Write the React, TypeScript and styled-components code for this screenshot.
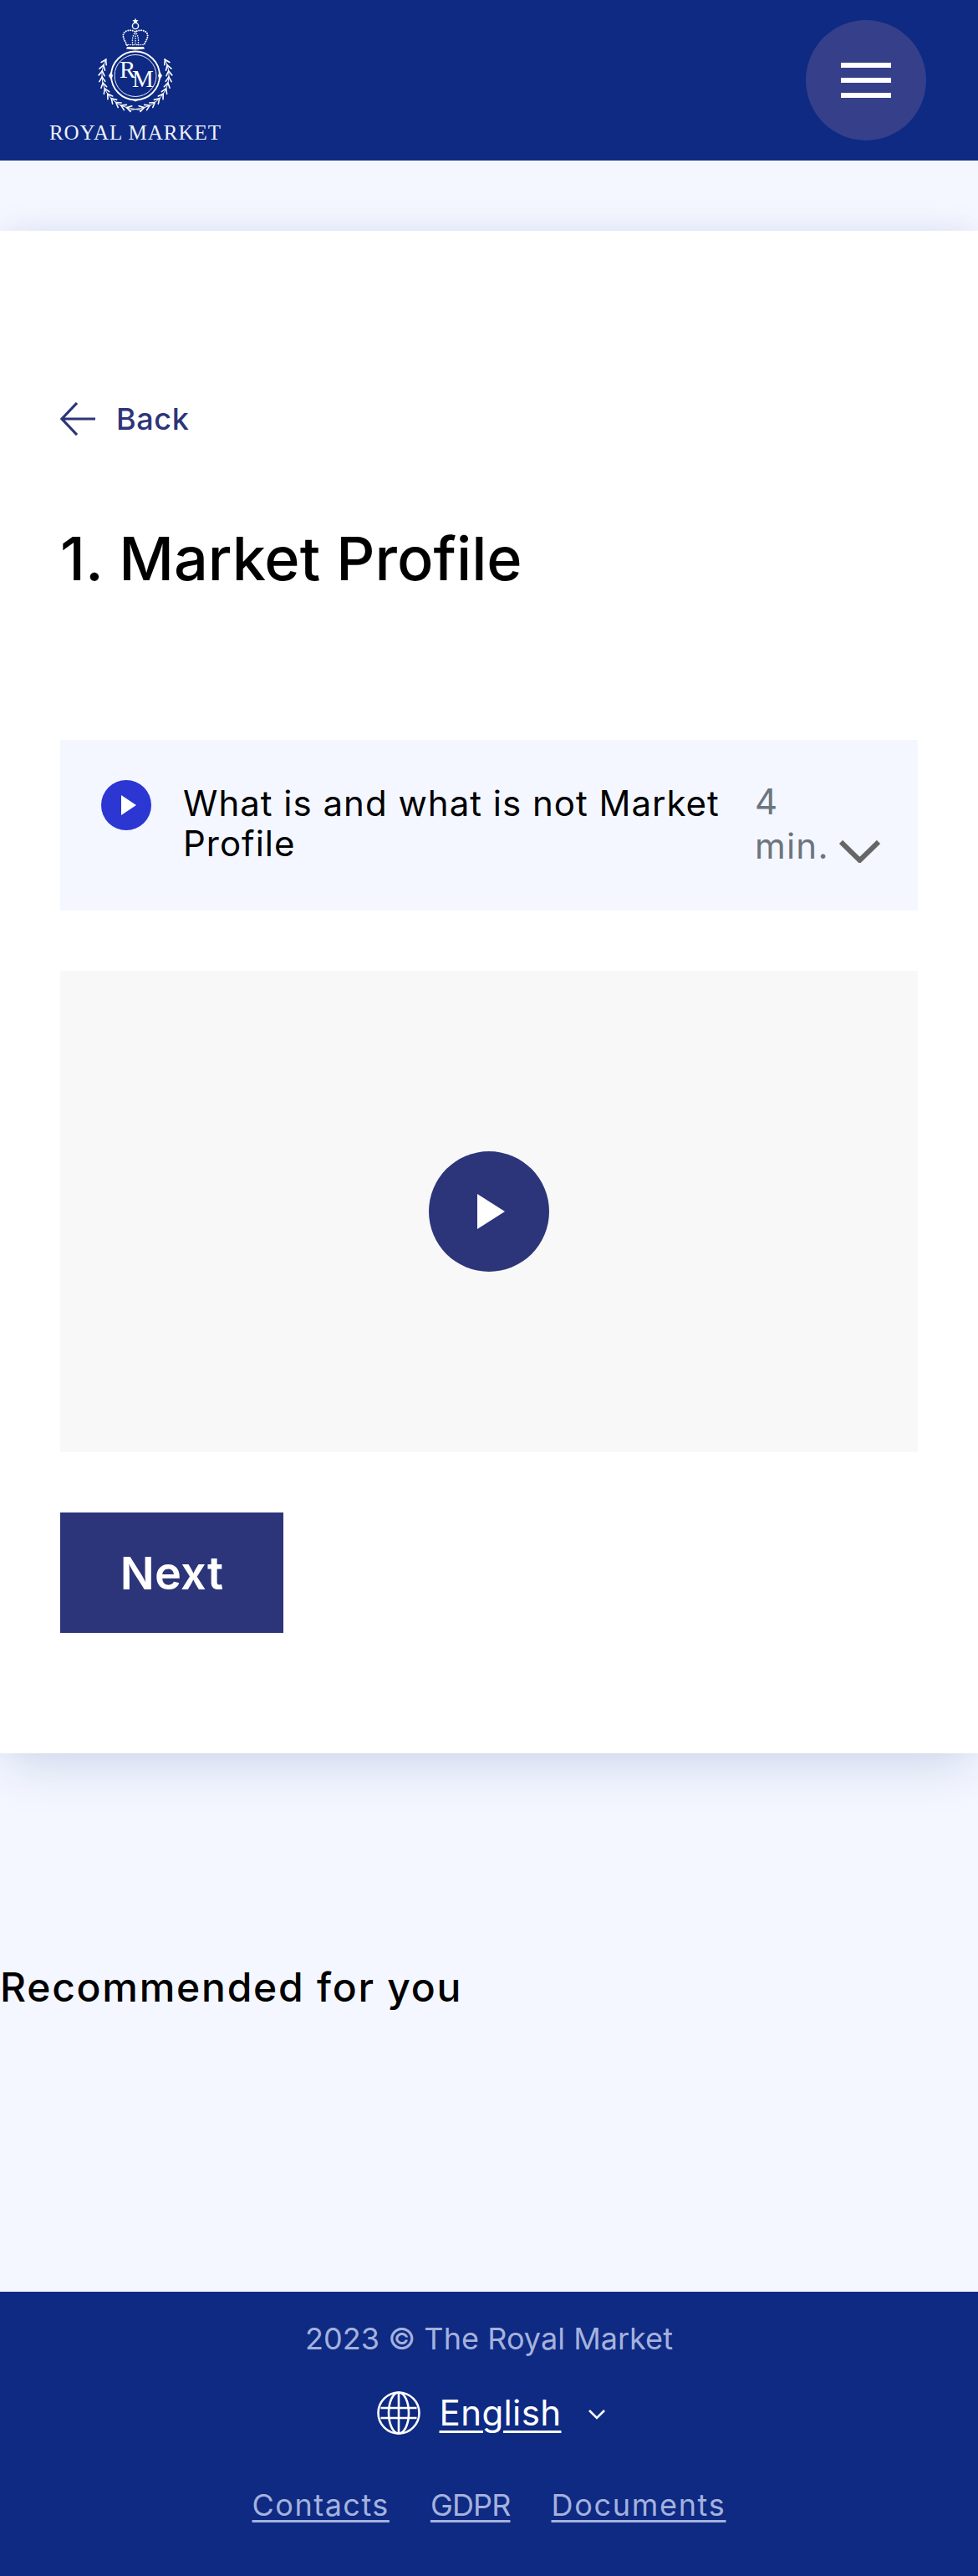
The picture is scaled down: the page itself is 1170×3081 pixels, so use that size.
import React from "react";
import styled, { createGlobalStyle } from "styled-components";

const Global = createGlobalStyle`
  html, body { margin: 0; padding: 0; background: #f4f7ff; }
  body { font-family: Inter, "Open Sans", "Liberation Sans", sans-serif; color: #000; }
  * { box-sizing: border-box; }
`;

const Page = styled.div`
  width: 1170px;
  height: 3081px;
  display: flex;
  flex-direction: column;
  overflow: hidden;
`;

const Header = styled.header`
  height: 192px;
  flex: none;
  background: #0e2a83;
  display: flex;
  justify-content: space-between;
  align-items: flex-start;
  padding: 20px 62px 0 60px;
  position: relative;
  z-index: 2;
`;

const Logo = styled.a`
  display: flex;
  flex-direction: column;
  align-items: center;
  width: 204px;
`;

const LogoMark = styled.svg`
  width: 104px;
  height: 118px;
  display: block;
`;

const LogoWord = styled.span`
  margin-top: 7px;
  font-family: "Liberation Serif", serif;
  font-size: 25px;
  line-height: 28px;
  letter-spacing: 1px;
  color: #eef0f8;
  white-space: nowrap;
`;

const Burger = styled.button`
  width: 144px;
  height: 144px;
  margin-top: 4px;
  border: 0;
  border-radius: 50%;
  background: #353f8a;
  display: flex;
  flex-direction: column;
  align-items: center;
  justify-content: center;
  gap: 12px;
  padding: 0;
`;

const BurgerBar = styled.span`
  width: 60px;
  height: 6px;
  background: #fff;
`;

const Main = styled.main`
  flex: 1;
  background: #f4f7ff;
  padding-top: 84px;
`;

const Card = styled.section`
  height: 1821px;
  background: #fff;
  padding: 205px 72px 0;
  box-shadow: 0 18px 60px -8px rgba(14, 42, 131, 0.17), 0 -4px 30px -6px rgba(14, 42, 131, 0.06);
`;

const BackLink = styled.a`
  display: flex;
  align-items: center;
  gap: 25px;
  height: 40px;
  font-size: 36px;
  font-weight: 500;
  line-height: 40px;
  letter-spacing: 0.6px;
  color: #2c3579;
`;

const Title = styled.h1`
  margin: 102px 0 0;
  font-size: 72px;
  line-height: 90px;
  font-weight: 500;
  letter-spacing: 0;
  color: #000;
`;

const Lesson = styled.div`
  margin-top: 172px;
  height: 204px;
  background: #f4f7ff;
  display: flex;
  align-items: flex-start;
  padding: 48px 45px 0 49px;
`;

const LessonIcon = styled.svg`
  width: 60px;
  height: 60px;
  flex: none;
  display: block;
`;

const LessonTitle = styled.div`
  margin: 4px 0 0 38px;
  width: 686px;
  flex: none;
  font-size: 42px;
  line-height: 48px;
  letter-spacing: 1px;
  color: #000;
`;

const LessonMeta = styled.div`
  display: flex;
  align-items: flex-end;
  gap: 8px;
  margin-left: -2px;
`;

const Duration = styled.div`
  width: 93px;
  font-size: 42px;
  line-height: 53px;
  color: #6c757d;
  margin-top: -1px;
  letter-spacing: 1.2px;
`;

const Chevron = styled.svg`
  width: 49px;
  height: 27px;
  flex: none;
  display: block;
  margin-bottom: 6px;
`;

const Video = styled.div`
  margin-top: 72px;
  height: 576px;
  background: #f8f8f8;
  display: flex;
  align-items: center;
  justify-content: center;
`;

const PlayCircle = styled.button`
  width: 144px;
  height: 144px;
  border: 0;
  padding: 0;
  border-radius: 50%;
  background: #2c3579;
  display: flex;
  align-items: center;
  justify-content: center;
`;

const PlayGlyph = styled.svg`
  width: 33px;
  height: 42px;
  margin-left: 5px;
  display: block;
`;

const NextButton = styled.button`
  display: block;
  margin-top: 72px;
  width: 267px;
  height: 144px;
  border: 0;
  background: #2c3579;
  color: #fff;
  font-family: inherit;
  font-size: 54px;
  font-weight: 600;
  letter-spacing: 0.3px;
  padding: 0;
`;

const Recommended = styled.h2`
  margin: 248px 0 0;
  font-size: 48px;
  line-height: 64px;
  font-weight: 500;
  letter-spacing: 1.75px;
  color: #000;
`;

const Footer = styled.footer`
  height: 340px;
  flex: none;
  background: #0e2a83;
  display: flex;
  flex-direction: column;
  align-items: center;
  padding-top: 34px;
`;

const Copyright = styled.div`
  font-size: 36px;
  line-height: 44px;
  color: #a5b1dd;
  letter-spacing: 0.05px;
`;

const Lang = styled.div`
  margin-top: 41px;
  height: 52px;
  display: flex;
  align-items: center;
  margin-left: 6px;
`;

const LangName = styled.a`
  margin-left: 23px;
  font-size: 42px;
  line-height: 52px;
  color: #fff;
  text-decoration: underline;
  text-decoration-thickness: 3px;
  text-underline-offset: 6px;
  letter-spacing: 0.4px;
`;

const LangCaret = styled.svg`
  width: 22px;
  height: 14px;
  margin-left: 32px;
  margin-top: 4px;
`;

const Links = styled.nav`
  margin-top: 62px;
  display: flex;
  gap: 49px;
`;

const FooterLink = styled.a<{ $tracking: number }>`
  font-size: 36px;
  line-height: 44px;
  color: #a5b1dd;
  text-decoration: underline;
  text-decoration-thickness: 3px;
  text-underline-offset: 5px;
  letter-spacing: ${(p) => p.$tracking}px;
`;

function Wreath({ flip }: { flip?: boolean }) {
  const cx = 162;
  const cy = 90;
  const r = 40;
  const leaves: React.ReactNode[] = [];
  for (let i = 0; i < 11; i++) {
    const deg = 152 + i * 10.3;
    const a = (deg * Math.PI) / 180;
    const px = cx + r * Math.cos(a);
    const py = cy - r * Math.sin(a);
    [-1, 1].forEach((s) => {
      const dir = ((deg - 90 - 180 + s * 32 + 360) * Math.PI) / 180;
      const len = 6.5;
      const qx = px + len * Math.cos(dir);
      const qy = py - len * Math.sin(dir);
      leaves.push(
        <line key={`${i}${s}`} x1={px} y1={py} x2={qx} y2={qy} stroke="#fff" strokeWidth={1.6} strokeLinecap="round" />
      );
    });
  }
  const a0 = (150 * Math.PI) / 180;
  const a1 = (262 * Math.PI) / 180;
  const d = `M${cx + r * Math.cos(a0)} ${cy - r * Math.sin(a0)} A${r} ${r} 0 0 0 ${cx + r * Math.cos(a1)} ${cy - r * Math.sin(a1)} L170 132`;
  return (
    <g transform={flip ? `translate(${2 * cx} 0) scale(-1 1)` : undefined}>
      <path d={d} fill="none" stroke="#fff" strokeWidth={1} />
      {leaves}
    </g>
  );
}

function LogoSvg() {
  return (
    <LogoMark viewBox="110 20 104 118" aria-label="Royal Market crest">
      <path d="M162 21.5l1 2.6 2.7.1-2.1 1.7.8 2.6-2.4-1.5-2.4 1.5.8-2.6-2.1-1.7 2.7-.1z" fill="#fff" />
      <circle cx="162" cy="31" r="3.6" fill="none" stroke="#fff" strokeWidth="1.4" />
      <g fill="none" stroke="#fff" strokeLinecap="round">
        <path d="M152 54C149 48 146 44 148 40c2-4 9-5 14-2 5-3 12-2 14 2 2 4-1 8-4 14" strokeWidth="2" strokeDasharray="0.1 2.6" />
        <path d="M162 38c-4 5-4 11-3 16M162 38c4 5 4 11 3 16M162 38v16" strokeWidth="1.6" strokeDasharray="0.1 2.6" />
        <path d="M151 53.500h22" strokeWidth="1.6" strokeDasharray="0.1 2.4" />
      </g>
      <path d="M152 56h20l1 2.500-11 1-11-1z" fill="#fff" />
      <circle cx="162" cy="90.500" r="29" fill="none" stroke="#fff" strokeWidth="1.8" />
      <circle cx="162" cy="90.500" r="25" fill="none" stroke="#fff" strokeWidth="0.9" />
      <path d="M133 85.500l-3 5 3 5 2-5zM191 85.500l3 5-3 5-2-5zM156 118.500l6 3 6-3-6 1z" fill="#fff" />
      <text x="143" y="93" fontFamily="Liberation Serif, serif" fontSize="29" fill="#fff">R</text>
      <text x="158" y="104" fontFamily="Liberation Serif, serif" fontSize="29" fill="#fff">M</text>
      <Wreath />
      <Wreath flip />
    </LogoMark>
  );
}

export default function App() {
  return (
    <Page>
      <Global />
      <Header>
        <Logo>
          <LogoSvg />
          <LogoWord>ROYAL MARKET</LogoWord>
        </Logo>
        <Burger aria-label="Menu">
          <BurgerBar />
          <BurgerBar />
          <BurgerBar />
        </Burger>
      </Header>
      <Main>
        <Card>
          <BackLink>
            <svg width="42" height="40" viewBox="0 0 42 40" fill="none" stroke="#2c3579" strokeWidth="3.2">
              <path d="M42 20H2M20 1L2 20l18 19" />
            </svg>
            Back
          </BackLink>
          <Title>1. Market Profile</Title>
          <Lesson>
            <LessonIcon viewBox="0 0 60 60">
              <circle cx="30" cy="30" r="30" fill="#2b36d3" />
              <path d="M24 18l18 12-18 12z" fill="#fff" />
            </LessonIcon>
            <LessonTitle>What is and what is not Market Profile</LessonTitle>
            <LessonMeta>
              <Duration>4 min.</Duration>
              <Chevron viewBox="0 0 49 27" fill="none" stroke="#666" strokeWidth="6">
                <path d="M2 2l22.500 22L47 2" />
              </Chevron>
            </LessonMeta>
          </Lesson>
          <Video>
            <PlayCircle aria-label="Play">
              <PlayGlyph viewBox="0 0 33 42">
                <path d="M0 0l33 21L0 42z" fill="#fff" />
              </PlayGlyph>
            </PlayCircle>
          </Video>
          <NextButton>Next</NextButton>
        </Card>
        <Recommended>Recommended for you</Recommended>
      </Main>
      <Footer>
        <Copyright>2023 © The Royal Market</Copyright>
        <Lang>
          <svg width="52" height="52" viewBox="0 0 52 52" fill="none" stroke="#fff" strokeWidth="2.6">
            <circle cx="26" cy="26" r="24.500" />
            <ellipse cx="26" cy="26" rx="12" ry="24.500" />
            <path d="M26 1.500v49M4.500 20h43M4.500 32h43" />
          </svg>
          <LangName>English</LangName>
          <LangCaret viewBox="0 0 22 14" fill="none" stroke="#fff" strokeWidth="2.6">
            <path d="M2 2l9 9 9-9" />
          </LangCaret>
        </Lang>
        <Links>
          <FooterLink $tracking={1.5}>Contacts</FooterLink>
          <FooterLink $tracking={-0.85}>GDPR</FooterLink>
          <FooterLink $tracking={1.7}>Documents</FooterLink>
        </Links>
      </Footer>
    </Page>
  );
}
